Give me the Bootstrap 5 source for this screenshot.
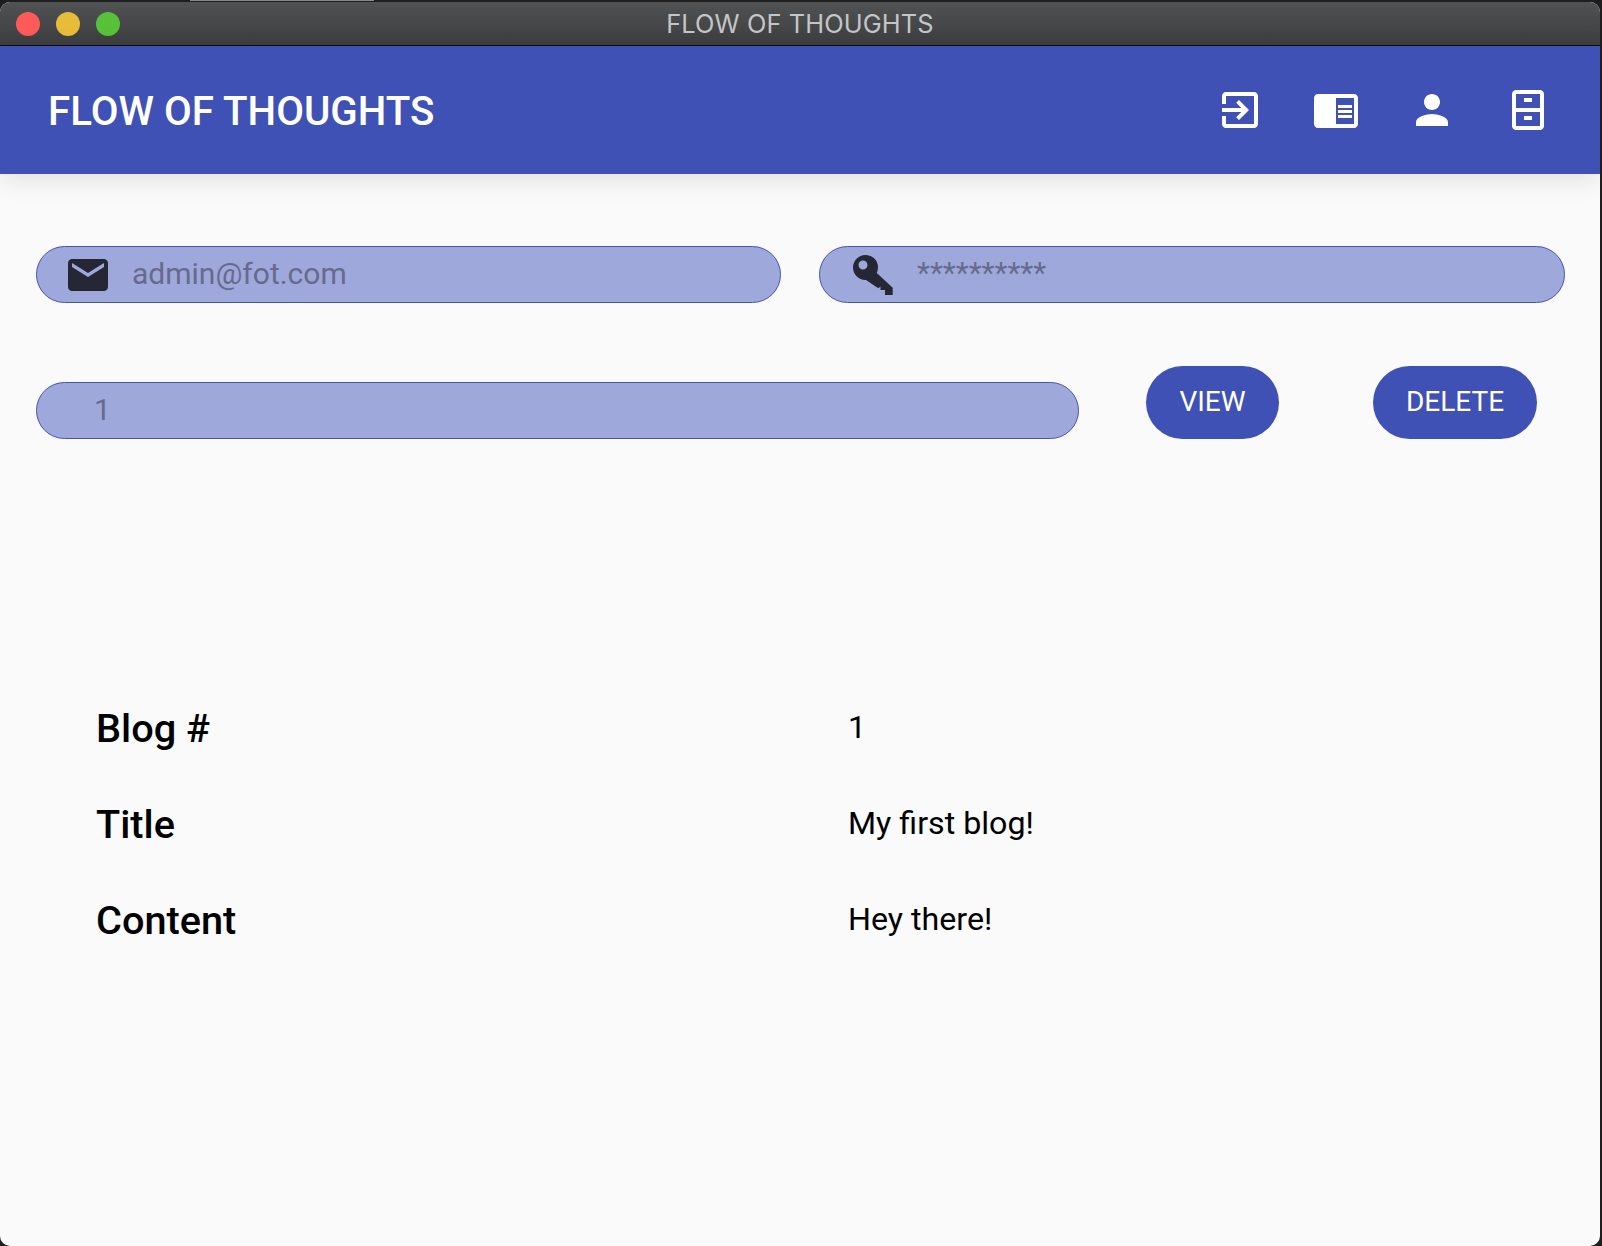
<!DOCTYPE html>
<html lang="en">
<head>
<meta charset="utf-8">
<title>FLOW OF THOUGHTS</title>
<link href="https://cdn.jsdelivr.net/npm/bootstrap@5.3.0/dist/css/bootstrap.min.css" rel="stylesheet">
<style>
html,body{height:100%}
body{background:#1e1e1e;font-family:Roboto,"Liberation Sans",sans-serif;margin:0;overflow:hidden;position:relative}
.top-sliver{position:absolute;left:190px;top:0;width:184px;height:1px;background:#8a8a8a}
.app-window{height:1244px;margin:2px 2px 0 0;background:#fafafa;border-radius:10px;overflow:hidden;display:flex;flex-direction:column}
.mac-bar{height:44px;flex:none;background:linear-gradient(#505254,#3c3d3f);border-bottom:1px solid #0c0c0c;position:relative;justify-content:center}
.mac-dots{position:absolute;left:16px;top:10px;gap:16px}
.mac-dot{width:24px;height:24px;border-radius:50%}
.mac-title{color:#c4c5c6;font-size:25.4px;font-family:Inter,Roboto,sans-serif;line-height:48px;letter-spacing:.1px}
.app-bar{height:128px;flex:none;background:#3f51b5;padding:0 48px 0 48px;box-shadow:0 6px 24px rgba(0,0,0,.1)}
.app-brand{color:#fff;font-size:40.3px;font-weight:500;margin:0;padding:4px 0 0}
.app-icons{gap:48px}
.app-icon{width:48px;height:48px;display:block;fill:#fff}
.app-main{padding:72px 35px 0 36px}
.field-row{gap:38px}
.pill-field{flex:0 0 745px;height:57px;background:#9fa8da;border:1px solid #4455b8;border-radius:28.5px;min-width:0}
.pill-field .form-control{background:transparent;border:0;box-shadow:none;border-radius:0;font-size:30px;color:#666b8e;padding:0 0 2px;height:100%;min-width:0}
.pill-field .form-control::placeholder{color:#666b8e;opacity:1}
.field-mail{padding-left:27px}
.field-mail .form-control{margin-left:20px}
.field-key{padding-left:33px;flex-basis:746px}
.field-key .form-control{margin-left:24px;padding-bottom:4px}
.field-key svg{margin-top:1px}
.field-icon{flex:none;fill:#252734}
.id-row{margin-top:63px;align-items:flex-end}
.id-field{flex:0 0 1043px;padding-left:57px}
.pill-btn{background:#3f51b5;border:0;color:#fff;font-size:28px;height:73px;border-radius:36.5px;line-height:1;flex:none;padding:0 0 2px}
.pill-btn:hover{background:#3f51b5;color:#fff}
.btn-view{width:133px;margin-left:67px}
.btn-delete{width:164px;margin-left:94px}
.blog-table{margin-top:241px;padding-left:60px;display:grid;grid-template-columns:752px 1fr;color:#000}
.blog-label,.blog-value{height:96px;display:flex;align-items:center}
.blog-label{font-size:39.7px;font-weight:500;padding-top:1px}
.blog-value{font-size:32.2px;padding-bottom:2px}
</style>
</head>
<body>
<div class="top-sliver"></div>
<div class="app-window">
  <div class="mac-bar d-flex align-items-center">
    <div class="mac-dots d-flex">
      <span class="mac-dot" style="background:#fd5b57"></span>
      <span class="mac-dot" style="background:#e6bc39"></span>
      <span class="mac-dot" style="background:#58c13a"></span>
    </div>
    <span class="mac-title">FLOW OF THOUGHTS</span>
  </div>
  <nav class="navbar app-bar d-flex justify-content-between align-items-center flex-nowrap">
    <span class="navbar-brand app-brand">FLOW OF THOUGHTS</span>
    <div class="app-icons d-flex">
      <svg class="app-icon" viewBox="0 0 24 24"><path d="M10.09 15.59L11.5 17l5-5-5-5-1.41 1.41L12.67 11H3v2h9.67l-2.58 2.59zM19 3H5c-1.11 0-2 .9-2 2v4h2V5h14v14H5v-4H3v4c0 1.1.89 2 2 2h14c1.1 0 2-.9 2-2V5c0-1.1-.9-2-2-2z"/></svg>
      <svg class="app-icon" viewBox="0 0 24 24"><path d="M13 12h7v1.5h-7zm0-2.5h7V11h-7zm0 5h7V16h-7zM21 4H3c-1.1 0-2 .9-2 2v13c0 1.1.9 2 2 2h18c1.1 0 2-.9 2-2V6c0-1.1-.9-2-2-2zm0 15h-9V6h9v13z"/></svg>
      <svg class="app-icon" viewBox="0 0 24 24"><path d="M12 12c2.21 0 4-1.79 4-4s-1.79-4-4-4-4 1.79-4 4 1.79 4 4 4zm0 2c-2.67 0-8 1.34-8 4v2h16v-2c0-2.66-5.33-4-8-4z"/></svg>
      <svg class="app-icon" viewBox="0 0 24 24"><path fill-rule="evenodd" d="M6 2h12c1.1 0 2 .9 2 2v16c0 1.1-.9 2-2 2H6c-1.1 0-2-.9-2-2V4c0-1.1.9-2 2-2zm0 2v7h12V4H6zm0 9v7h12v-7H6z"/><path d="M10 6h4v2h-4zM10 15h4v2h-4z"/></svg>
    </div>
  </nav>
  <main class="app-main">
    <div class="field-row d-flex">
      <div class="pill-field field-mail d-flex align-items-center">
        <svg class="field-icon" width="48" height="48" viewBox="0 0 24 24"><path d="M20 4H4c-1.1 0-1.99.9-1.99 2L2 18c0 1.1.9 2 2 2h16c1.1 0 2-.9 2-2V6c0-1.1-.9-2-2-2zm0 4l-8 5-8-5V6l8 5 8-5v2z"/></svg>
        <input class="form-control" type="text" placeholder="admin@fot.com" aria-label="Email">
      </div>
      <div class="pill-field field-key d-flex align-items-center">
        <svg class="field-icon" width="40" height="40" viewBox="0 0 40 40"><path fill-rule="evenodd" d="M12.500 0C19.400 0 25 5.400 25 12c0 2.200-.4 4.200-1.200 6L39.700 32.700V40H32v-5h-4.500v-3.500l-2.200 1.800L13 24.900c-.2.100-.300.100-.500.100C5.600 25 0 19.400 0 12.500S5.600 0 12.500 0zM10 5.500a4.500 4.500 0 1 0 0 9 4.500 4.500 0 0 0 0-9z"/></svg>
        <input class="form-control" type="text" placeholder="**********" aria-label="Password">
      </div>
    </div>
    <div class="id-row d-flex">
      <div class="pill-field id-field d-flex align-items-center">
        <input class="form-control" type="text" placeholder="1" aria-label="Blog id">
      </div>
      <button class="btn pill-btn btn-view" type="button">VIEW</button>
      <button class="btn pill-btn btn-delete" type="button">DELETE</button>
    </div>
    <div class="blog-table">
      <div class="blog-label">Blog #</div><div class="blog-value">1</div>
      <div class="blog-label">Title</div><div class="blog-value">My first blog!</div>
      <div class="blog-label">Content</div><div class="blog-value">Hey there!</div>
    </div>
  </main>
</div>
<script src="https://cdn.jsdelivr.net/npm/bootstrap@5.3.0/dist/js/bootstrap.bundle.min.js"></script>
</body>
</html>
